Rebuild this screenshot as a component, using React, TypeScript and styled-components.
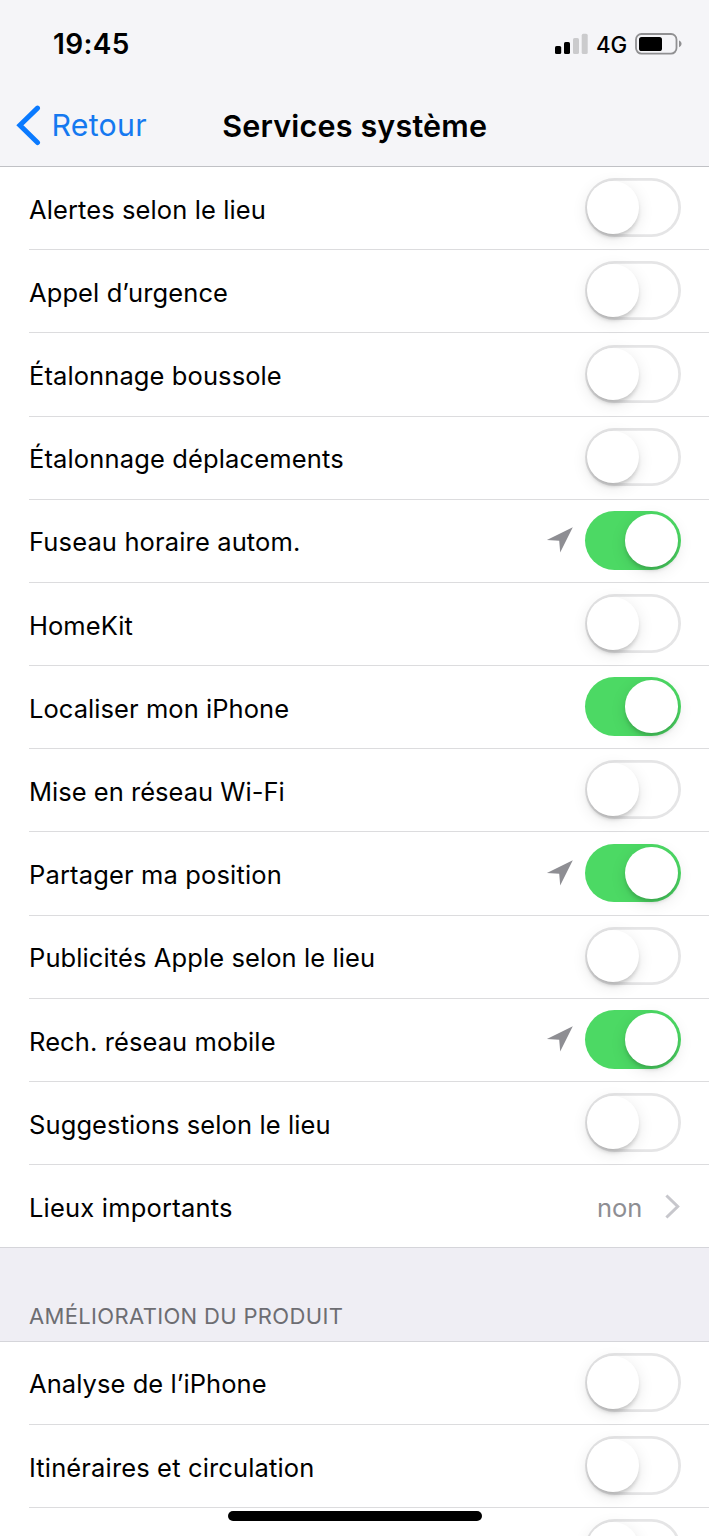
import React from 'react';
import styled, { createGlobalStyle } from 'styled-components';

const GlobalStyle = createGlobalStyle`
  * { box-sizing: border-box; }
  html, body { margin: 0; padding: 0; background: #fff; }
  body { overflow: hidden; font-family: Inter, 'Liberation Sans', sans-serif; color: #000; }
`;

const Screen = styled.div`
  position: relative;
  width: 709.4px;
  height: 1536px;
  overflow: hidden;
  background: #fff;
`;

const Header = styled.header`
  height: 167px;
  background: #f5f5f8;
  border-bottom: 1px solid #c0c1c5;
`;

const StatusBar = styled.div`
  display: flex;
  align-items: center;
  justify-content: space-between;
  height: 88px;
  padding: 0 27.4px 0 53px;
`;

const Label = styled.span<{ $size: number; $weight?: number; $spacing?: number; $color?: string }>`
  font-size: ${p => p.$size}px;
  font-weight: ${p => p.$weight ?? 400};
  letter-spacing: ${p => p.$spacing ?? 0}px;
  color: ${p => p.$color ?? '#000'};
  line-height: 1.2;
  white-space: nowrap;
`;

const Clock = styled(Label)`
  padding-top: 1px;
`;

const StatusIcons = styled.div`
  display: flex;
  align-items: center;
  svg { display: block; }
`;

const Network = styled(Label)`
  width: 30px;
  margin: 2px 9px 0 8px;
`;

const NavBar = styled.nav`
  display: grid;
  grid-template-columns: 206px 1fr 206px;
  align-items: center;
  height: 75px;
`;

const Back = styled.div`
  display: flex;
  align-items: center;
  gap: 10.5px;
  padding-left: 16px;
  svg { display: block; }
`;

const BackText = styled(Label)`
  padding-bottom: 0.6px;
`;

const Title = styled(Label)`
  justify-self: center;
  padding-top: 2px;
`;

const List = styled.ul`
  list-style: none;
  margin: 0;
  padding: 0;
`;

const Row = styled.li<{ $last?: boolean }>`
  display: flex;
  align-items: center;
  height: 83.18px;
  margin-left: ${p => (p.$last ? 0 : 29)}px;
  padding: 0 29px 0 ${p => (p.$last ? 29 : 0)}px;
  border-bottom: 1px solid ${p => (p.$last ? '#d5d5da' : '#dcdcde')};
`;

const RowText = styled(Label)`
  flex: 1;
  padding-top: 4px;
`;

const Value = styled(Label)`
  margin-right: 22px;
  padding-top: 3.6px;
`;

const Arrow = styled.svg`
  display: block;
  margin-right: 11px;
`;

const Track = styled.div<{ $on?: boolean }>`
  display: flex;
  justify-content: ${p => (p.$on ? 'flex-end' : 'flex-start')};
  width: 96px;
  height: 58.6px;
  padding: 3px ${p => (p.$on ? 3 : 2)}px;
  margin: 0 -0.3px 1px 0.3px;
  border-radius: 30px;
  background: ${p => (p.$on ? '#4cd964' : '#fff')};
  box-shadow: ${p => (p.$on ? 'none' : 'inset 0 0 0 2.8px #e5e5e6')};
`;

const Knob = styled.div`
  width: 52.6px;
  height: 52.6px;
  border-radius: 50%;
  background: #fff;
  box-shadow: 0 4px 4px -1px rgba(0, 0, 0, 0.18), 0 4px 16px rgba(0, 0, 0, 0.1);
`;

const SectionHeader = styled.div`
  display: flex;
  align-items: flex-end;
  height: 93.4px;
  padding: 0 29px 11px;
  background: #efeef4;
  border-bottom: 1px solid #d5d5da;
`;

const HomeIndicator = styled.div`
  position: absolute;
  left: 228px;
  bottom: 15px;
  width: 254px;
  height: 10px;
  border-radius: 5px;
  background: #000;
`;

type Item = { text: string; on?: boolean; located?: boolean; spacing?: number };

const services: Item[] = [
  { text: 'Alertes selon le lieu' },
  { text: 'Appel d’urgence' },
  { text: 'Étalonnage boussole' },
  { text: 'Étalonnage déplacements', spacing: 0.14 },
  { text: 'Fuseau horaire autom.', on: true, located: true, spacing: 0.14 },
  { text: 'HomeKit', spacing: 0.05 },
  { text: 'Localiser mon iPhone', on: true, spacing: 0.06 },
  { text: 'Mise en réseau Wi-Fi', spacing: 0.02 },
  { text: 'Partager ma position', on: true, located: true, spacing: 0.15 },
  { text: 'Publicités Apple selon le lieu' },
  { text: 'Rech. réseau mobile', on: true, located: true },
  { text: 'Suggestions selon le lieu' },
];

const product: Item[] = [
  { text: 'Analyse de l’iPhone', spacing: 0.07 },
  { text: 'Itinéraires et circulation', spacing: 0.14 },
  { text: '' },
];

const LocationArrow = () => (
  <Arrow width="27" height="27" viewBox="0 0 27 27">
    <path d="M26.8 0.2 L0.9 13 L13.2 13.8 L14.2 25.6 Z" fill="#8e8e93" />
  </Arrow>
);

const SwitchRow = ({ item }: { item: Item }) => (
  <Row>
    <RowText $size={25.5} $spacing={item.spacing ?? 0.1}>{item.text}</RowText>
    {item.located && <LocationArrow />}
    <Track $on={item.on}><Knob /></Track>
  </Row>
);

export default function App() {
  return (
    <>
      <GlobalStyle />
      <Screen>
        <Header>
          <StatusBar>
            <Clock $size={28} $weight={600} $spacing={0.35}>19:45</Clock>
            <StatusIcons>
              <svg width="34" height="22" viewBox="0 0 34 22">
                <rect x="1" y="13" width="6.2" height="8" rx="1.6" />
                <rect x="10" y="9" width="6" height="12" rx="1.6" />
                <rect x="19" y="5" width="6" height="16" rx="1.6" fill="#cbcbcd" />
                <rect x="27.7" y="0.8" width="6" height="20.2" rx="1.6" fill="#cbcbcd" />
              </svg>
              <Network $size={22.3} $weight={500} $spacing={-0.2}>4G</Network>
              <svg width="47" height="22" viewBox="0 0 47 22">
                <rect x="1" y="1" width="40.5" height="19.6" rx="5.5" fill="none" stroke="#909092" strokeWidth="1.8" />
                <rect x="4" y="4" width="23" height="14" rx="2.6" />
                <path d="M44 7.4 C47.4 8.6 47.4 13 44 14.2 Z" fill="#909092" />
              </svg>
            </StatusIcons>
          </StatusBar>
          <NavBar>
            <Back>
              <svg width="25" height="42" viewBox="0 0 25 42">
                <path d="M21.5 3.1 L3.9 20.3 L21.5 37.5" fill="none" stroke="#0a7aff" strokeWidth="5" strokeLinecap="round" strokeLinejoin="miter" />
              </svg>
              <BackText $size={30.3} $spacing={0.25} $color="#1579f0">Retour</BackText>
            </Back>
            <Title $size={30.5} $weight={600} $spacing={0.18}>Services système</Title>
          </NavBar>
        </Header>
        <List>
          {services.map(item => <SwitchRow key={item.text} item={item} />)}
          <Row $last>
            <RowText $size={25.5} $spacing={0.2}>Lieux importants</RowText>
            <Value $size={25.5} $color="#8e8e93">non</Value>
            <svg width="16" height="25" viewBox="0 0 16 25">
              <path d="M2.4 1.5 L13.7 12.5 L2.4 23.5" fill="none" stroke="#c7c7cc" strokeWidth="3" />
            </svg>
          </Row>
        </List>
        <SectionHeader>
          <Label $size={22} $spacing={0.34} $color="#6d6d72">AMÉLIORATION DU PRODUIT</Label>
        </SectionHeader>
        <List>
          {product.map(item => <SwitchRow key={item.text} item={item} />)}
        </List>
        <HomeIndicator />
      </Screen>
    </>
  );
}
